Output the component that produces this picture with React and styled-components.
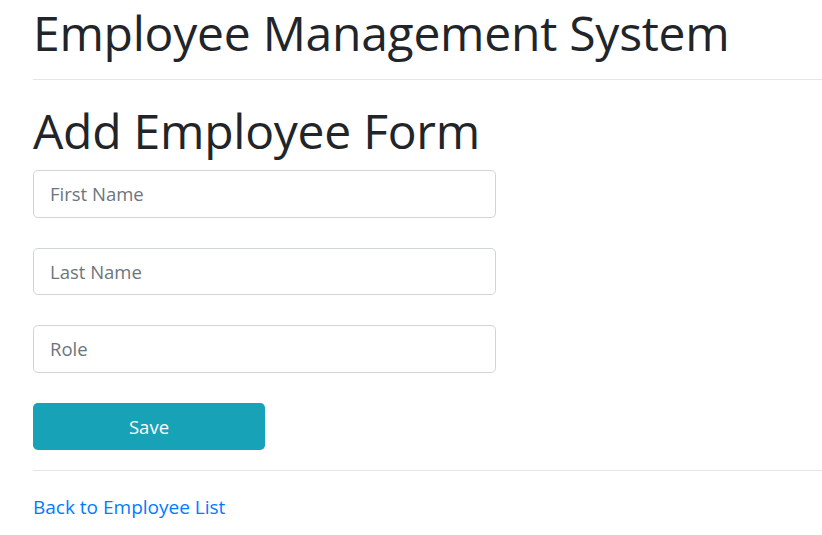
import React, { useState } from "react";
import styled, { createGlobalStyle } from "styled-components";

const GlobalStyle = createGlobalStyle`
  body {
    margin: 0;
    font-family: "Open Sans", "Noto Sans", sans-serif;
    color: #212529;
    background: #fff;
  }
  * {
    box-sizing: border-box;
  }
`;

const Page = styled.div`
  padding-left: 33px;
`;

const Heading = styled.h1`
  width: fit-content;
  margin: 0;
  font-size: 48px;
  font-weight: 400;
  line-height: normal;
  letter-spacing: -0.25px;
  white-space: nowrap;
`;

const Divider = styled.hr`
  margin: ${(p) => p.$margin || "0"};
  border: 0;
  border-top: 1px solid rgba(0, 0, 0, 0.1);
`;

const Form = styled.form`
  display: flex;
  flex-direction: column;
  align-items: flex-start;
  gap: 30px;
  margin-top: 7px;
`;

const Input = styled.input`
  width: 463px;
  height: 47.5px;
  padding: 0 16px;
  font-family: inherit;
  font-size: 18.5px;
  color: #495057;
  border: 1px solid #ced4da;
  border-radius: 4.8px;
  outline: none;
  &::placeholder {
    color: #6c757d;
  }
`;

const Button = styled.button`
  width: 232px;
  height: 47px;
  border: 0;
  border-radius: 4.8px;
  background: #17a2b8;
  color: #fff;
  font-family: inherit;
  font-size: 18.5px;
  cursor: pointer;
`;

const BackLink = styled.a`
  display: inline-block;
  margin-top: 23px;
  font-size: 19px;
  color: #007bff;
  text-decoration: none;
`;

export default function App() {
  const [firstName, setFirstName] = useState("");
  const [lastName, setLastName] = useState("");
  const [role, setRole] = useState("");

  function handleSubmit(e) {
    e.preventDefault();
  }

  return (
    <Page>
      <GlobalStyle />
      <Heading>Employee Management System</Heading>
      <Divider $margin="13.5px 0 18.5px" />
      <Heading>Add Employee Form</Heading>
      <Form onSubmit={handleSubmit}>
        <Input
          type="text"
          placeholder="First Name"
          value={firstName}
          onChange={(e) => setFirstName(e.target.value)}
        />
        <Input
          type="text"
          placeholder="Last Name"
          value={lastName}
          onChange={(e) => setLastName(e.target.value)}
        />
        <Input
          type="text"
          placeholder="Role"
          value={role}
          onChange={(e) => setRole(e.target.value)}
        />
        <Button type="submit">Save</Button>
      </Form>
      <Divider $margin="20px 0 0" />
      <BackLink href="#">Back to Employee List</BackLink>
    </Page>
  );
}
